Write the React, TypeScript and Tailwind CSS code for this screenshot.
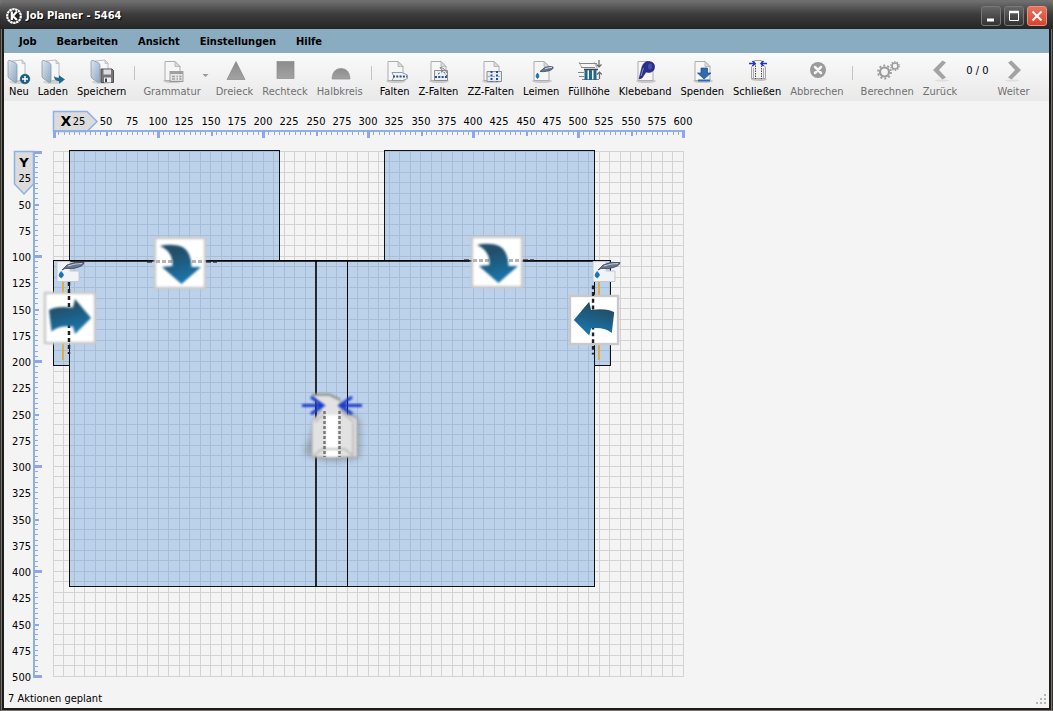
import type { ReactNode } from "react";

const SCALE = 1.05;

const menus = ["Job", "Bearbeiten", "Ansicht", "Einstellungen", "Hilfe"];

function Folder({ children }: { children?: ReactNode }) {
  return (
    <svg width="26" height="26" viewBox="0 0 26 26">
      <ellipse cx="13" cy="23" rx="10" ry="2" fill="#000" opacity="0.12" />
      <path d="M6 2 L16 1 L19 4 V20 L8 23 Z" fill="#f7f7f7" stroke="#a9adb2" strokeWidth="0.8" />
      <path d="M16 1 V4.500 H19" fill="#ddd" stroke="#a9adb2" strokeWidth="0.6" />
      <path d="M2 2.500 Q2 1 4 1.500 L9 3.500 Q11 4.500 11 6.500 V22 Q11 24 9 23.300 L4 20 Q2 19 2 17 Z" fill="url(#folder)" stroke="#8799ad" strokeWidth="0.8" />
      {children}
    </svg>
  );
}

function Page({ children }: { children?: ReactNode }) {
  return (
    <svg width="26" height="26" viewBox="0 0 26 26">
      <ellipse cx="14" cy="22" rx="10" ry="2" fill="#000" opacity="0.16" />
      <path d="M6 2.500 H16 L21 7.500 V21.500 H6 Z" fill="#f6f6f6" stroke="#adadad" />
      <path d="M16 2.500 V7.500 H21 Z" fill="#dcdcdc" stroke="#adadad" strokeWidth="0.8" />
      {children}
    </svg>
  );
}

const NewIcon = () => (
  <Folder>
    <circle cx="19" cy="20" r="4.800" fill="#1f5f86" stroke="#174a6a" strokeWidth="0.6" />
    <path d="M19 17 V23 M16 20 H22" stroke="#fff" strokeWidth="1.500" />
  </Folder>
);

const LoadIcon = () => (
  <Folder>
    <path d="M14 17 Q15 19 19 18.800 V16.200 L25 20.500 L19 24.800 V22.200 Q14 22 14 17 Z" fill="#236a93" />
  </Folder>
);

const SaveIcon = () => (
  <Folder>
    <path d="M12 10 H23 L24.500 11.500 V23.500 H12 Z" fill="#777" stroke="#4e4e4e" />
    <rect x="14.500" y="10.500" width="7.500" height="5" fill="#dedede" />
    <rect x="15" y="18.500" width="7" height="5" fill="#efefef" />
    <rect x="16" y="19.500" width="2" height="3.500" fill="#444" />
  </Folder>
);

const WeightIcon = () => (
  <Page>
    <g opacity="0.8">
      <rect x="11" y="12.500" width="13" height="10" fill="#e4e4e4" stroke="#8d8d8d" />
      <path d="M11 14 H24" stroke="#8d8d8d" strokeWidth="2" />
      <path d="M13 17.500 H16 M17.500 17.500 H19 M20.500 17.500 H22.500 M13 20 H16 M17.500 20 H19 M20.500 20 H22.500" stroke="#8b8b8b" strokeWidth="1.400" />
    </g>
  </Page>
);

const TriangleIcon = () => (
  <svg width="26" height="26" viewBox="0 0 26 26">
    <path d="M14 2.500 L23 20.500 H5 Z" fill="url(#shape)" stroke="#8a8a8a" strokeWidth="0.7" />
  </svg>
);

const SquareIcon = () => (
  <svg width="26" height="26" viewBox="0 0 26 26">
    <rect x="5" y="2.500" width="17" height="17" fill="url(#shape)" stroke="#8a8a8a" strokeWidth="0.7" />
  </svg>
);

const HalfIcon = () => (
  <svg width="26" height="26" viewBox="0 0 26 26">
    <path d="M5 20 Q5.500 9.500 14 9.500 Q22.500 9.500 23 20 Z" fill="url(#shape)" stroke="#8a8a8a" strokeWidth="0.7" />
  </svg>
);

const FoldIcon = () => (
  <Page>
    <path d="M10 13.500 H20 L25.500 16 V19.500 L21 21.500 H10 L12 17.500 Z" fill="#f2f2f2" stroke="#9a9a9a" />
    <path d="M11 17.500 H25" stroke="#1f4f9a" strokeWidth="1.800" strokeDasharray="2 1.300" />
  </Page>
);

const ZFoldIcon = () => (
  <Page>
    <path d="M9.500 11.500 H22.500 V21.500 H9.500 Z" fill="#efefef" stroke="#8f8f8f" />
    <path d="M15 8.500 Q20 9 22 14 M15 8.500 L18 12" fill="none" stroke="#777" />
    <path d="M10 18 H22" stroke="#1f4f9a" strokeWidth="1.800" strokeDasharray="2 1.300" />
    <path d="M13 15 L18 12 L22 17" fill="none" stroke="#1f4f9a" strokeDasharray="2 1.500" />
  </Page>
);

const ZZFoldIcon = () => (
  <Page>
    <path d="M9 12.500 H23.500 V22.500 H9 Z" fill="#e7ecf3" stroke="#8f8f8f" />
    <path d="M13.500 12 V23 M19 12 V23" stroke="#1f4f9a" strokeWidth="2" strokeDasharray="2 1.500" />
    <path d="M9 17.500 H24" stroke="#aaa" strokeDasharray="3 2" />
  </Page>
);

const GlueIcon = () => (
  <Page>
    <path d="M12 12.500 L16 9 Q22 6.500 25 8 Q26 10.500 20 12 Q15 13 12 12.500 Z" fill="#69758a" stroke="#3d4960" strokeWidth="0.8" />
    <path d="M17 9.800 Q21 8.200 24 8.500" fill="none" stroke="#d6dce6" />
    <path d="M9.500 14 Q12.500 17.500 9.500 19.500 Q6.500 17.500 9.500 14 Z" fill="#1878b8" stroke="#1878b8" />
  </Page>
);

const FillIcon = () => (
  <svg width="26" height="26" viewBox="0 0 26 26">
    <path d="M3 4.500 H21 M5 8.500 H19 M2 13.500 H8 M3 17.500 H8 M6 20.500 H23" stroke="#858585" />
    <path d="M3 3 L6 9 M18 3 L21 9" stroke="#999" strokeWidth="0.8" />
    <path d="M8 10.500 H22" stroke="#444" strokeWidth="1.500" />
    <path d="M10 11 V21 M14.500 11 V21 M19 11 V21" stroke="#20688e" strokeWidth="3" />
    <path d="M23 1 V8 M20.500 5.500 L23 8 L25.500 5.500 M23.500 13 V20 M21 15.500 L23.500 13 L26 15.500" fill="none" stroke="#666" strokeWidth="1.200" />
  </svg>
);

const TapeIcon = () => (
  <Page>
    <path d="M7 20 L10 8 Q12 2 17 2.500 Q23 3 22.500 8.500 Q22 13 17 13.500 L14 13 L10 19 Z" fill="#2a2f8a" stroke="#1b1f66" strokeWidth="0.6" />
    <ellipse cx="18" cy="7.500" rx="2" ry="3" fill="#474ea8" />
    <path d="M11.500 9 L9 17" stroke="#8086d4" />
  </Page>
);

const DonateIcon = () => (
  <Page>
    <path d="M12 9 H18.500 V14 H22 L15 20 L8.500 14 H12 Z" fill="#2f69b0" stroke="#1d4b8c" strokeWidth="0.7" />
    <path d="M9 21.500 H21" stroke="#2f69b0" strokeWidth="2" />
  </Page>
);

const CloseBagIcon = () => (
  <svg width="26" height="26" viewBox="0 0 26 26">
    <ellipse cx="15" cy="20.500" rx="8" ry="1.500" fill="#000" opacity="0.2" />
    <path d="M7.500 8 L10.500 5 V1.500 H17.500 V5 L21.500 8 V19.500 H7.500 Z" fill="#f1f1f1" stroke="#a3a3a3" />
    <path d="M11.500 4 V20 M17.500 4 V20" stroke="#4e4e4e" strokeDasharray="1.500 1" />
    <path d="M9.500 9 V20 M19.500 9 V20" stroke="#aaa" />
    <path d="M5 4.500 H11 M8.500 2 L11 4.500 L8.500 7 M23 4.500 H17 M19.500 2 L17 4.500 L19.500 7" fill="none" stroke="#1d36c4" strokeWidth="1.500" />
  </svg>
);

const CancelIcon = () => (
  <svg width="26" height="26" viewBox="0 0 26 26">
    <circle cx="14" cy="11" r="8" fill="#9b9b9b" />
    <path d="M11 8 L17 14 M17 8 L11 14" stroke="#f5f5f5" strokeWidth="2.500" strokeLinecap="round" />
  </svg>
);

const GearsIcon = () => (
  <svg width="26" height="26" viewBox="0 0 26 26" fill="none" stroke="#9b9b9b">
    <circle cx="10.500" cy="13" r="4.500" strokeWidth="2.200" />
    <circle cx="10.500" cy="13" r="6.500" strokeWidth="1.800" strokeDasharray="2 2.080" />
    <circle cx="21" cy="7" r="3" strokeWidth="1.600" />
    <circle cx="21" cy="7" r="4.300" strokeWidth="1.200" strokeDasharray="1.350 1.350" />
  </svg>
);

const BackIcon = () => (
  <svg width="26" height="26" viewBox="0 0 26 26">
    <ellipse cx="15" cy="21.500" rx="7" ry="1" fill="#000" opacity="0.08" />
    <path d="M6 11 L15.500 1.500 L19 3.500 L12 11 L19 18.500 L15.500 20.500 Z" fill="#a3a3a3" />
  </svg>
);

const NextIcon = () => (
  <svg width="26" height="26" viewBox="0 0 26 26">
    <ellipse cx="11" cy="21.500" rx="7" ry="1" fill="#000" opacity="0.08" />
    <path d="M20 11 L10.500 1.500 L7 3.500 L14 11 L7 18.500 L10.500 20.500 Z" fill="#a3a3a3" />
  </svg>
);

function Tool({ label, icon, disabled }: { label: string; icon: ReactNode; disabled?: boolean }) {
  return (
    <button
      type="button"
      disabled={disabled}
      className="flex flex-col items-center pt-[6px] text-black disabled:text-[#707070]"
    >
      <span className="-mx-1">{icon}</span>
      <span className="leading-[14px] whitespace-nowrap">{label}</span>
    </button>
  );
}

const Separator = () => <div className="-mx-px mt-[13px] h-[14px] w-px bg-[#c4c4c4]" />;

function TitleBar() {
  const box = "flex h-5 w-5 items-center justify-center rounded-[3px] border";
  return (
    <header className="flex h-[29px] items-center rounded-t-[6px] bg-linear-to-b from-[#6e6e6e] from-5% via-[#3c3c3c] to-[#262626] pt-[2px] pr-[6px] pl-[6px] text-white">
      <svg width="16" height="16" viewBox="0 0 16 16">
        <circle cx="8" cy="8" r="6.800" fill="#222" stroke="#fff" strokeWidth="2.200" strokeDasharray="2.500 0.500" />
        <path d="M5.800 3.500 V12 M11 3.500 L6.800 8 L11 12" fill="none" stroke="#fff" strokeWidth="2.200" />
      </svg>
      <h1 className="ml-1 flex-1 font-bold [text-shadow:1px_1px_1px_#000]">Job Planer - 5464</h1>
      <div className="flex gap-[3px]">
        <button type="button" aria-label="Minimieren" className={`${box} border-[#777] bg-linear-to-b from-[#666] to-[#333]`}>
          <svg width="16" height="16" viewBox="0 0 16 16"><path d="M4 12 H11" stroke="#fff" strokeWidth="3" /></svg>
        </button>
        <button type="button" aria-label="Maximieren" className={`${box} border-[#777] bg-linear-to-b from-[#666] to-[#333]`}>
          <svg width="16" height="16" viewBox="0 0 16 16">
            <path d="M3.500 4 V12.500 H12.500 V4" fill="none" stroke="#fff" />
            <path d="M3 4 H13" stroke="#fff" strokeWidth="2.500" />
          </svg>
        </button>
        <button type="button" aria-label="Fenster schließen" className={`${box} border-[#e39183] bg-linear-to-b from-[#ea705b] to-[#d8442c]`}>
          <svg width="16" height="16" viewBox="0 0 16 16"><path d="M3.500 3.500 L12.500 12.500 M12.500 3.500 L3.500 12.500" stroke="#fff" strokeWidth="2" /></svg>
        </button>
      </div>
    </header>
  );
}

function Toolbar() {
  return (
    <div className="flex h-12 items-start gap-[9px] bg-linear-to-b from-[#fafafa] to-[#e9e9e9] pl-[5px]">
      <Tool label="Neu" icon={<NewIcon />} />
      <Tool label="Laden" icon={<LoadIcon />} />
      <Tool label="Speichern" icon={<SaveIcon />} />
      <Separator />
      <Tool label="Grammatur" icon={<WeightIcon />} disabled />
      <button type="button" aria-label="Grammatur wählen" disabled className="-mr-[2px] -ml-2 pt-[20px]">
        <svg width="7" height="5" viewBox="0 0 7 5"><path d="M0.500 1 H6.500 L3.500 4 Z" fill="#999" /></svg>
      </button>
      <Tool label="Dreieck" icon={<TriangleIcon />} disabled />
      <Tool label="Rechteck" icon={<SquareIcon />} disabled />
      <Tool label="Halbkreis" icon={<HalfIcon />} disabled />
      <Separator />
      <Tool label="Falten" icon={<FoldIcon />} />
      <Tool label="Z-Falten" icon={<ZFoldIcon />} />
      <Tool label="ZZ-Falten" icon={<ZZFoldIcon />} />
      <Tool label="Leimen" icon={<GlueIcon />} />
      <Tool label="Füllhöhe" icon={<FillIcon />} />
      <Tool label="Klebeband" icon={<TapeIcon />} />
      <Tool label="Spenden" icon={<DonateIcon />} />
      <Tool label="Schließen" icon={<CloseBagIcon />} />
      <Tool label="Abbrechen" icon={<CancelIcon />} disabled />
      <Separator />
      <Tool label="Berechnen" icon={<GearsIcon />} disabled />
      <Tool label="Zurück" icon={<BackIcon />} disabled />
      <span className="pt-[11px] whitespace-nowrap">0 / 0</span>
      <Tool label="Weiter" icon={<NextIcon />} disabled />
    </div>
  );
}

const range = (end: number, step: number) =>
  Array.from({ length: end / step + 1 }, (_, i) => i * step);

function RulerX() {
  return (
    <svg width="660" height="50" className="ml-[49px] overflow-visible">
      <path d="M0.500 10.500 H34 L44 20.500 L34 30.500 H0.500 Z" fill="#dcdcdc" stroke="#8fb0e6" strokeWidth="1.500" />
      <rect x="0" y="29" width="631" height="2" fill="#8fb0e6" />
      {range(600, 5).map((v) => {
        const x = Math.round(v * SCALE);
        if (v % 100 === 0) return <rect key={v} x={x - (v ? 1 : 0)} y="29" width="3" height="8" fill="#8fa5f0" />;
        if (v % 50 === 0) return <rect key={v} x={x} y="31" width="2" height="4" fill="#8fa5f0" />;
        return <rect key={v} x={x} y="31" width="1" height="3" fill="#8fa9e6" />;
      })}
      <text x="13" y="25" textAnchor="middle" className="text-[14px] font-bold [font-family:'DejaVu_Sans',sans-serif]">X</text>
      {range(600, 25).slice(1).map((v) => (
        <text key={v} x={Math.round(v * SCALE)} y="24" textAnchor="middle">{v}</text>
      ))}
    </svg>
  );
}

function RulerY() {
  return (
    <svg width="49" height="528" className="shrink-0 overflow-visible">
      <path d="M10.500 0.500 H29.500 V33 L20 43 L10.500 33 Z" fill="#dcdcdc" stroke="#8fb0e6" strokeWidth="1.500" />
      <rect x="29" y="0" width="2" height="527" fill="#8fb0e6" />
      {range(500, 5).map((v) => {
        const y = Math.round(v * SCALE);
        if (v % 100 === 0) return <rect key={v} x="30" y={y - (v ? 1 : 0)} width="8" height="3" fill="#8fa5f0" />;
        if (v % 50 === 0) return <rect key={v} x="31" y={y} width="4" height="2" fill="#8fa5f0" />;
        return <rect key={v} x="31" y={y} width="3" height="1" fill="#8fa9e6" />;
      })}
      <text x="20" y="16" textAnchor="middle" className="text-[13px] font-bold [font-family:'DejaVu_Sans',sans-serif]">Y</text>
      {range(500, 25).slice(1).map((v) => (
        <text key={v} x="27" y={Math.round(v * SCALE) + 5} textAnchor="end">{v}</text>
      ))}
    </svg>
  );
}

function Tile({ x, y, size = 52, arrow }: { x: number; y: number; size?: number; arrow: "down" | "right" | "left" }) {
  const side = "M5 18 Q12 13.500 29 15.500 L31 7 L47 26 L31 42 L29 34.500 Q15 33 7.500 39.500 Z";
  return (
    <g transform={`translate(${x} ${y}) scale(${size / 52})`}>
      <rect x="1" y="1" width="50" height="50" fill="#fff" stroke="#c9c9c9" strokeWidth="2.500" filter="url(#soft)" />
      {arrow === "down" ? (
        <>
          <path d="M-7 24.500 H0 M52 24.500 H63" stroke="#222" strokeWidth="2.500" strokeDasharray="5 2" opacity="0.8" />
          <path d="M2 24.500 H50" stroke="#b5b5b5" strokeWidth="3" strokeDasharray="4 2" />
          <path d="M6 9 Q14 7 24 8.500 Q37 11 37.500 30 H47 L27.500 47 L8 30 L18.500 29 Q19 14 6 9 Z" fill="url(#arrow)" filter="url(#soft)" />
        </>
      ) : (
        <>
          <path d="M25 -10 V62" stroke="#222" strokeWidth="2.500" strokeDasharray="4 3" />
          <path d={side} transform={arrow === "left" ? "translate(52 0) scale(-1 1)" : undefined} fill="url(#arrow)" filter="url(#soft)" />
        </>
      )}
    </g>
  );
}

function GlueMark({ x, y }: { x: number; y: number }) {
  return (
    <g transform={`translate(${x} ${y})`}>
      <path d="M10 18 V99" stroke="#e2ad3e" strokeWidth="2" />
      <path d="M4 0.500 H17 V10 H26 V20.500 H4 Z" fill="#f1f3f6" stroke="#c4c8cf" />
      <path d="M9 9 L14 4 Q22 0 31 1.500 Q31 5.500 20 7.500 L12 7.500 Z" fill="#68758b" stroke="#3c485c" strokeWidth="0.8" />
      <path d="M15 5 Q22 2.500 29 2.500" fill="none" stroke="#c9d2df" strokeWidth="1.200" />
      <path d="M8 10.500 Q12.500 14 8.500 16.800 Q4 15.500 8 10.500 Z" fill="#1673b4" stroke="#1673b4" strokeWidth="0.8" />
    </g>
  );
}

function Plan() {
  return (
    <svg width="631" height="528" className="shrink-0 overflow-visible" role="img" aria-label="Plan">
      <g stroke="#d3d3d3" fill="none">
        {range(600, 10).map((v) => <path key={v} d={`M${Math.floor(v * SCALE) + 0.5} 0 V526`} />)}
        {range(500, 10).map((v) => <path key={v} d={`M0 ${Math.floor(v * SCALE) + 0.5} H631`} />)}
      </g>
      <g fill="#6a9ddd" fillOpacity="0.4" stroke="#111">
        <rect x="16.500" y="-0.500" width="210" height="110" />
        <rect x="331.500" y="-0.500" width="210" height="110" />
        <rect x="16.500" y="109.500" width="525" height="326" />
        <rect x="0.500" y="109.500" width="16" height="105" />
        <rect x="541.500" y="109.500" width="16" height="105" />
      </g>
      <path d="M16 110 H542" stroke="#000" strokeWidth="1.500" />
      <path d="M263 109.500 V435.500" stroke="#000" strokeWidth="1.600" />
      <path d="M294.500 109.500 V435.500" stroke="#000" />
      <GlueMark x={0} y={110} />
      <GlueMark x={536} y={110} />
      <Tile x={101} y={86} arrow="down" />
      <Tile x={418} y={85} arrow="down" />
      <Tile x={-9} y={141} arrow="right" />
      <Tile x={516} y={144} size={50} arrow="left" />
      {/* bag with closed fold */}
      <g transform="translate(247 240)">
        <path d="M4 62 Q30 76 60 66 V30 L50 20 H20 Z" fill="#555" opacity="0.4" filter="url(#shadow)" />
        <g filter="url(#soft)">
          <path d="M12 3 H30 L40 8 V20 L57 28 V66 H12 V30 L22 20 Z" fill="#e2e2e2" stroke="#aaa" />
          <path d="M12 4 H30 L40 9" fill="none" stroke="#8d8d8d" strokeWidth="2" />
          <rect x="26" y="24" width="12" height="42" fill="#fff" />
          <path d="M15 31 L24 23 M54 31 L42 22 M12 66 L22 58 H45 L54 66 M53 32 V64" fill="none" stroke="#bdbdbd" strokeWidth="2" />
        </g>
        <path d="M24.500 20 V66 M39.500 20 V66" stroke="#4c4c4c" strokeWidth="2.500" strokeDasharray="3 2" opacity="0.7" />
        <path d="M2 14.500 H23 M11 6 L23 14.500 L11 23 M62 14.500 H40 M52 6 L40 14.500 L52 23" fill="none" stroke="#1d3bcd" strokeWidth="3" filter="url(#soft)" />
      </g>
    </svg>
  );
}

function Defs() {
  return (
    <svg width="0" height="0" className="absolute" aria-hidden="true">
      <defs>
        <linearGradient id="folder" x1="0" y1="0" x2="1" y2="1">
          <stop offset="0" stopColor="#dbe6f1" />
          <stop offset="1" stopColor="#8da5bf" />
        </linearGradient>
        <linearGradient id="shape" x1="0" y1="0" x2="0" y2="1">
          <stop offset="0" stopColor="#8c8c8c" />
          <stop offset="1" stopColor="#a2a2a2" />
        </linearGradient>
        <linearGradient id="arrow" x1="0" y1="0" x2="0.300" y2="1">
          <stop offset="0.300" stopColor="#224f6a" />
          <stop offset="1" stopColor="#1a75ab" />
        </linearGradient>
        <filter id="soft"><feGaussianBlur stdDeviation="0.800" /></filter>
        <filter id="shadow" x="-20%" y="-20%" width="140%" height="140%"><feGaussianBlur stdDeviation="3" /></filter>
      </defs>
    </svg>
  );
}

export default function App() {
  return (
    <div className="flex min-h-screen flex-col bg-[#77716d] text-[11px] leading-[14px] text-black [font-family:'DejaVu_Sans_Condensed','DejaVu_Sans',sans-serif]">
      <Defs />
      <TitleBar />
      <div className="flex flex-1 flex-col border-x border-b border-x-[#33302e] border-b-[#77716d] px-px">
        <div className="flex flex-1 flex-col border-x-2 border-b-2 border-[#1c1b1b] bg-[#f4f4f4]">
          <nav className="flex h-6 items-center bg-[#8aacc0] pt-px pl-[5px] font-bold">
            {menus.map((menu) => (
              <button key={menu} type="button" className="px-[10px]">{menu}</button>
            ))}
          </nav>
          <Toolbar />
          <main className="flex-1">
            <RulerX />
            <div className="flex">
              <RulerY />
              <Plan />
            </div>
          </main>
          <footer className="flex h-5 items-center justify-between pl-1">
            <span className="pt-px">7 Aktionen geplant</span>
            <svg width="14" height="14" viewBox="0 0 14 14" fill="#b5b5b5">
              <path d="M9 3h2v2h-2z M5 7h2v2h-2z M9 7h2v2h-2z M1 11h2v2h-2z M5 11h2v2h-2z M9 11h2v2h-2z" />
            </svg>
          </footer>
        </div>
      </div>
    </div>
  );
}
